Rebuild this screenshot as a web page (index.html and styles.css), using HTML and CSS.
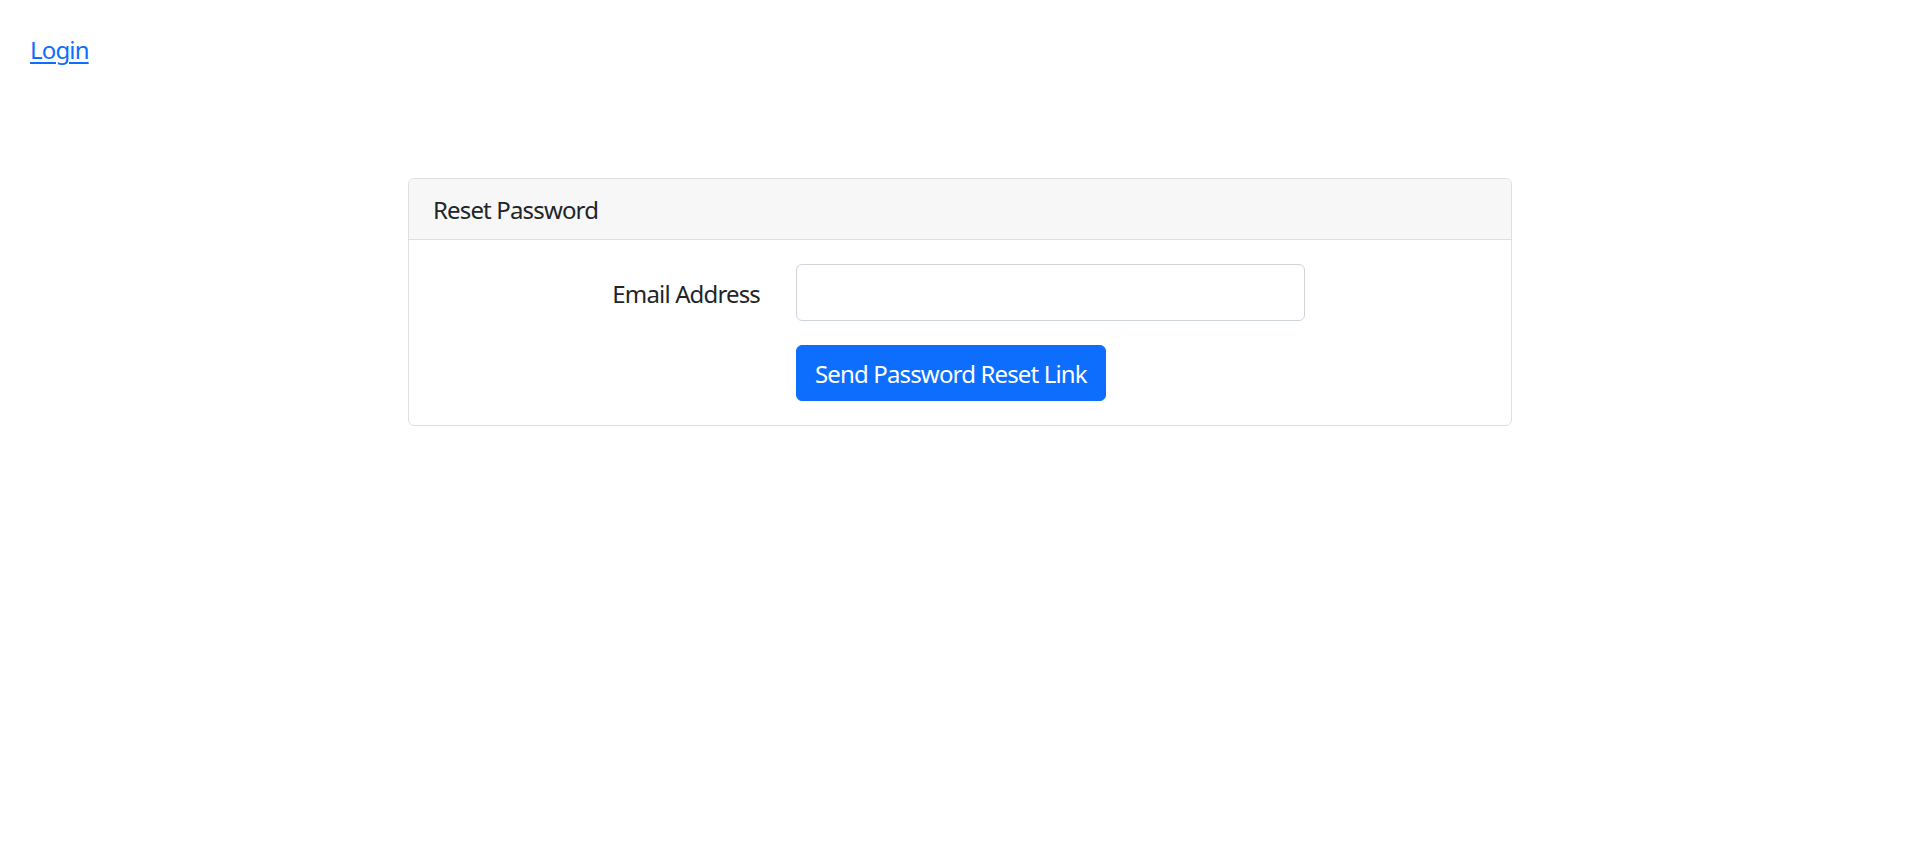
FILE: index.html
```html
<!DOCTYPE html>
<html lang="en">
<head>
<meta charset="utf-8">
<title>Reset Password</title>
<link rel="stylesheet" href="styles.css">
</head>
<body>
<nav class="topbar">
  <a class="login-link" href="#">Login</a>
</nav>
<main class="page">
  <section class="card">
    <div class="card-header">Reset Password</div>
    <div class="card-body">
      <form class="form">
        <div class="form-row">
          <label class="form-label" for="email">Email Address</label>
          <div class="form-field">
            <input class="form-input" id="email" type="email">
          </div>
        </div>
        <div class="form-row form-row-last">
          <div class="form-label-spacer"></div>
          <div class="form-field">
            <button class="btn-primary" type="button">Send Password Reset Link</button>
          </div>
        </div>
      </form>
    </div>
  </section>
</main>
</body>
</html>
```
FILE: styles.css
```css
html, body {
  margin: 0;
  padding: 0;
  background: #fff;
}
body {
  font-family: "Noto Sans", "Open Sans", sans-serif;
  font-size: 24px;
  line-height: 36px;
  letter-spacing: -0.85px;
  color: #212529;
}
.topbar {
  padding: 32px 30px 0;
  height: 36px;
}
.login-link {
  color: #0d6efd;
  text-decoration: underline;
  text-underline-offset: 3px;
  text-decoration-thickness: 2px;
}
.page {
  display: flex;
  justify-content: center;
  padding-top: 110px;
}
.card {
  width: 1104px;
  box-sizing: border-box;
  border: 1px solid #dfdfdf;
  border-radius: 6px;
  background: #fff;
  overflow: hidden;
}
.card-header {
  background: #f7f7f7;
  border-bottom: 1px solid #dfdfdf;
  padding: 13px 24px 11px;
  line-height: 36px;
}
.card-body {
  padding: 24px;
}
.form {
  display: flex;
  flex-direction: column;
  gap: 24px;
}
.form-row {
  display: flex;
  margin: 0 -18px;
}
.form-label,
.form-label-spacer {
  width: 363px;
  box-sizing: border-box;
  padding: 12px 18px 9px;
  text-align: right;
  flex: none;
}
.form-label-spacer {
  padding: 0;
}
.form-field {
  width: 544.5px;
  box-sizing: border-box;
  padding: 0 18px;
  flex: none;
}
.form-input {
  display: block;
  width: 100%;
  box-sizing: border-box;
  height: 57px;
  border: 1.5px solid #ced4da;
  border-radius: 6px;
  padding: 9px 18px;
  font: inherit;
  background: #fff;
}
.btn-primary {
  display: inline-block;
  font: inherit;
  letter-spacing: -0.85px;
  line-height: 36px;
  color: #fff;
  background: #0d6efd;
  border: 1.5px solid #0d6efd;
  border-radius: 6px;
  padding: 10px 18px 8px;
  cursor: pointer;
}
```
